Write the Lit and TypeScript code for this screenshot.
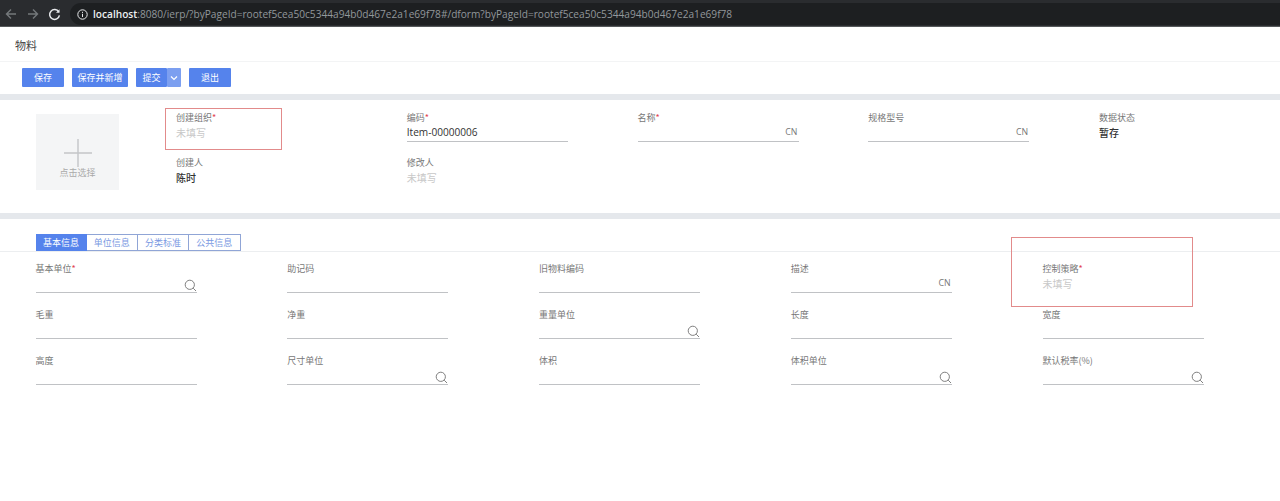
import { LitElement, html, css, nothing } from "lit";
import { customElement } from "lit/decorators.js";

type F = { label: string; req?: boolean; value?: string; kind?: "cn" | "search" | "empty" | "strong" | "input"; };

const search = html`<svg class="search" viewBox="0 0 13 13" width="13" height="13" fill="none" stroke="#808080" stroke-width="1"><circle cx="5.8" cy="5.8" r="4.6"></circle><path d="M9.2 9.2 12 12"></path></svg>`;

const top: F[] = [
  { label: "创建组织", req: true, kind: "empty" },
  { label: "编码", req: true, value: "Item-00000006", kind: "input" },
  { label: "名称", req: true, kind: "cn" },
  { label: "规格型号", kind: "cn" },
  { label: "数据状态", value: "暂存", kind: "strong" },
  { label: "创建人", value: "陈时", kind: "strong" },
  { label: "修改人", kind: "empty" },
];
const bottom: F[] = [
  { label: "基本单位", req: true, kind: "search" },
  { label: "助记码", kind: "input" },
  { label: "旧物料编码", kind: "input" },
  { label: "描述", kind: "cn" },
  { label: "控制策略", req: true, kind: "empty" },
  { label: "毛重", kind: "input" },
  { label: "净重", kind: "input" },
  { label: "重量单位", kind: "search" },
  { label: "长度", kind: "input" },
  { label: "宽度", kind: "input" },
  { label: "高度", kind: "input" },
  { label: "尺寸单位", kind: "search" },
  { label: "体积", kind: "input" },
  { label: "体积单位", kind: "search" },
  { label: "默认税率(%)", kind: "search" },
];

@customElement("app-root")
export class AppRoot extends LitElement {
  static styles = css`
    :host { display: block; width: 1280px; height: 501px; overflow: hidden; position: relative; background: #fff;
      font-family: "Noto Sans CJK SC", "Open Sans", sans-serif; color: #777; font-size: 9px; }
    .chrome { height: 27px; box-sizing: border-box; background: #2a2c2f; display: flex; align-items: center; padding: 2px 0 0 4px; border-bottom: 1px solid #55585a; }
    .nav { display: flex; align-items: center; gap: 8px; width: 66px; flex: none; }
    .pill { flex: 1; height: 22px; background: #1d1f21; border-radius: 11px 0 0 11px; display: flex; align-items: center; padding-left: 7px; gap: 5px;
      font: 10.13px "Open Sans", sans-serif; color: #92979b; white-space: nowrap; }
    .pill b { font-weight: 600; color: #eceff1; }
    .title { height: 35px; box-sizing: border-box; padding: 9px 0 0 15px; font-size: 11px; line-height: 18px; color: #444; border-bottom: 1px solid #f3f4f5; }
    .toolbar { height: 32px; box-sizing: border-box; display: flex; align-items: flex-start; gap: 8px; padding: 6px 0 0 22px; }
    .btn { height: 19px; background: #5583ec; color: #fff; border-radius: 1px; display: flex; align-items: center; justify-content: center; font-size: 9px; }
    .b42 { width: 42px; } .b56 { width: 56px; }
    .split { display: flex; }
    .split .btn:first-child { width: 31px; }
    .split .more { width: 14px; background: #7c9ff0; }
    .band { height: 6px; background: #e5e8ec; }
    .head { height: 113px; box-sizing: border-box; padding: 14px 0 0 36px; display: flex; gap: 57px; }
    .pic { width: 83px; height: 76px; flex: none; background: #f4f5f6; display: flex; flex-direction: column; align-items: center; padding-top: 25px; box-sizing: border-box; color: #aaa; }
    .pic svg { display: block; }
    .pic span { line-height: 12px; white-space: nowrap; }
    .grid { display: grid; }
    .topgrid { grid-template-columns: repeat(5, 230.75px); grid-auto-rows: 45px; margin-top: -3px; }
    .botgrid { grid-template-columns: repeat(5, 251.75px); grid-auto-rows: 46px; padding: 10px 0 0 35.5px; }
    .field { width: 161px; }
    .label { height: 14px; line-height: 14px; font-size: 9px; color: #777; white-space: nowrap; }
    .req { color: #e2434f; }
    .val { height: 14px; line-height: 14px; white-space: nowrap; display: flex; align-items: center; justify-content: space-between; }
    .line { border-bottom: 1px solid #c0c2c5; height: 16px; box-sizing: content-box; align-items: flex-start; }
    .empty { color: #c8c8c8; font-size: 10px; margin-top: 1px; }
    .strong { color: #333; font-size: 10px; font-weight: 500; margin-top: 1px; }
    .input { color: #333; font: 10.1px/14px "Open Sans", sans-serif; }
    .cn { justify-content: flex-end; font: 8.8px/14px "Open Sans", sans-serif; color: #777; padding-right: 1px; }
    .s { justify-content: flex-end; align-items: flex-end; }
    .search { display: block; }
    .tabs { margin-top: 15px; height: 18px; box-sizing: border-box; border-bottom: 1px solid #eceef0; padding-left: 35.5px; display: flex; }
    .tab { width: 51.25px; height: 17px; box-sizing: border-box; border: 1px solid #90a5d6; border-left-width: 0; color: #7a99e2; display: flex; align-items: center; justify-content: center; font-size: 9px; background: #fff; }
    .tab.on { background: #5583ec; color: #fff; border: 1px solid #5583ec; }
    .mark { position: absolute; border: 1px solid #e28b8b; box-sizing: border-box; pointer-events: none; }
    .m1 { left: 165px; top: 108px; width: 117px; height: 42px; }
    .m2 { left: 1011px; top: 237px; width: 182px; height: 70px; }
  `;

  field(f: F) {
    const k = f.kind;
    const lined = k !== "empty" && k !== "strong";
    return html`<div class="field">
      <div class="label">${f.label}${f.req ? html`<span class="req">*</span>` : nothing}</div>
      <div class="val ${lined ? "line" : ""} ${k === "cn" ? "cn" : k === "search" ? "s" : k ?? ""}">
        ${k === "cn" ? "CN" : k === "search" ? search : k === "empty" ? "未填写" : f.value ?? ""}
      </div>
    </div>`;
  }

  render() {
    return html`
      <div class="chrome">
        <div class="nav">
          <svg width="14" height="14" viewBox="0 0 14 14" fill="none" stroke="#74787b" stroke-width="1.4"><path d="M12 7H2.5M7 2.5 2.5 7 7 11.5"></path></svg>
          <svg width="14" height="14" viewBox="0 0 14 14" fill="none" stroke="#74787b" stroke-width="1.4"><path d="M2 7h9.5M7 2.5 11.5 7 7 11.5"></path></svg>
          <svg width="13" height="13" viewBox="0 0 14 14" fill="none" stroke="#e8eaec" stroke-width="1.6"><path d="M11.6 4.2A5.3 5.3 0 1 0 12.3 8"></path><path d="M12.4 1.4v3.8H8.6" fill="#e8eaec" stroke="none"></path></svg>
        </div>
        <div class="pill">
          <svg width="11" height="11" viewBox="0 0 11 11" fill="none" stroke="#e8eaec" stroke-width="1"><circle cx="5.5" cy="5.5" r="4.7"></circle><path d="M5.5 4.8v3.2M5.5 2.8v1.1"></path></svg>
          <span><b>localhost</b>:8080/ierp/?byPageId=rootef5cea50c5344a94b0d467e2a1e69f78#/dform?byPageId=rootef5cea50c5344a94b0d467e2a1e69f78</span>
        </div>
      </div>
      <div class="title">物料</div>
      <div class="toolbar">
        <div class="btn b42">保存</div>
        <div class="btn b56">保存并新增</div>
        <div class="split"><div class="btn">提交</div><div class="btn more">
          <svg width="8" height="6" viewBox="0 0 8 6" fill="none" stroke="#fff" stroke-width="1.2"><path d="M1 1.5 4 4.5 7 1.5"></path></svg>
        </div></div>
        <div class="btn b42">退出</div>
      </div>
      <div class="band"></div>
      <div class="head">
        <div class="pic">
          <svg width="28" height="28" viewBox="0 0 28 28" stroke="#c3c5c8" stroke-width="1.4"><path d="M14 0v28M0 14h28"></path></svg>
          <span>点击选择</span>
        </div>
        <div class="grid topgrid">${top.map((f) => this.field(f))}</div>
      </div>
      <div class="band"></div>
      <div class="tabs">
        <div class="tab on">基本信息</div><div class="tab">单位信息</div><div class="tab">分类标准</div><div class="tab">公共信息</div>
      </div>
      <div class="grid botgrid">${bottom.map((f) => this.field(f))}</div>
      <div class="mark m1"></div>
      <div class="mark m2"></div>
    `;
  }
}
